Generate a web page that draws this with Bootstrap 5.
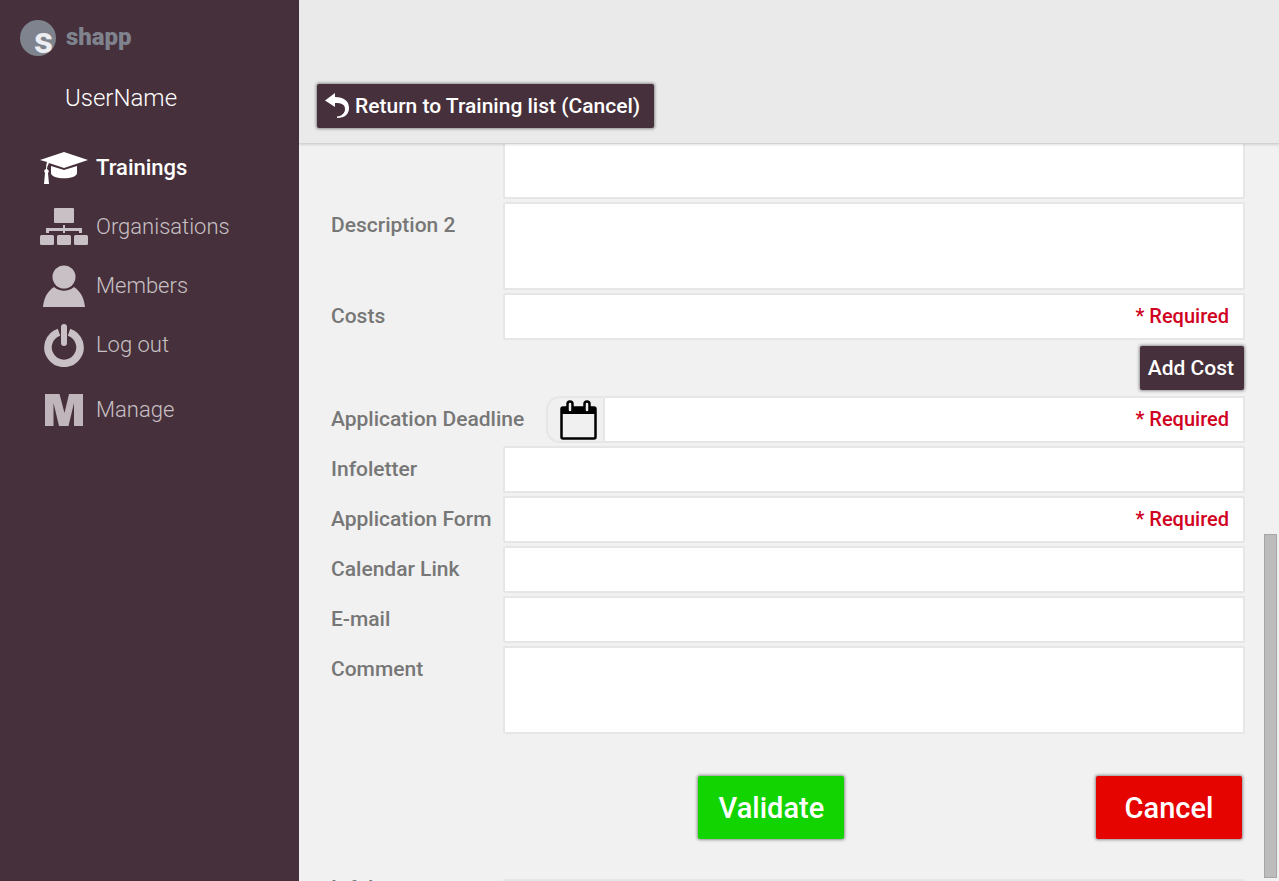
<!DOCTYPE html>
<html lang="en">
<head>
<meta charset="utf-8">
<meta name="viewport" content="width=device-width, initial-scale=1">
<title>shapp – Trainings</title>
<link href="https://cdn.jsdelivr.net/npm/bootstrap@5.3.0/dist/css/bootstrap.min.css" rel="stylesheet">
<style>
  body { font-family: Roboto, "Liberation Sans", sans-serif; background: #f1f1f1; }
  .sidebar { width: 299px; background: #46303b; }
  .brand-name { font-size: 24px; line-height: 32px; font-weight: 900; color: #7f838d; padding-bottom: 2px; margin-left: 10px; }
  .user-name { font-size: 24px; line-height: 32px; font-weight: 300; padding-left: 65px; margin-top: 22px; }
  .side-nav { margin-top: 24px; }
  .side-nav .nav-link { height: 59px; font-size: 22px; font-weight: 300; color: #c8c0c4; padding: 0 0 0 40px; }
  .side-nav .nav-link.active { color: #fff; font-weight: 500; }
  .side-nav .nav-link:last-child { margin-top: 6px; }
  .topbar { height: 144px; background: #eaeaea; border-bottom: 1px solid #d2d2d2; box-shadow: 0 1px 2px rgba(0,0,0,.12); padding: 0 18px 15px; z-index: 1; }
  .btn-solid { --bs-btn-color: #fff; --bs-btn-hover-color: #fff; --bs-btn-active-color: #fff; border: 0; border-radius: 2px; font-weight: 500; box-shadow: 0 0 3px 1px rgba(0,0,0,.4); }
  .btn-plum { --bs-btn-bg: #46303b; --bs-btn-hover-bg: #5a404d; --bs-btn-active-bg: #36242d; font-size: 21px; line-height: 28px; padding: 8px 10px 8px 8px; }
  .btn-return { padding-right: 14px; }
  .btn-go { --bs-btn-bg: #12d400; --bs-btn-hover-bg: #10bd00; --bs-btn-active-bg: #0ea600; }
  .btn-stop { --bs-btn-bg: #e60400; --bs-btn-hover-bg: #cc0400; --bs-btn-active-bg: #b30300; }
  .btn-big { width: 146px; height: 63px; font-size: 29px; line-height: 32px; padding: 0; }
  .form-area { padding: 0 34px 0 32px; }
  .form-stack { gap: 3px; }
  .field-label { width: 172px; flex: none; font-size: 21px; line-height: 28px; padding-top: 9px; font-weight: 500; color: #777; white-space: nowrap; }
  .field-label.wide-label { width: 215px; }
  .form-control { border: 2px solid #e6e6e6; border-radius: 2px; height: 47px; font-size: 20px; font-weight: 500; padding: 0 14px 2px; resize: none; }
  .form-control.required-box::placeholder { color: #d0021f; text-align: right; opacity: 1; }
  textarea.form-control { height: 88px; }
  textarea.form-control.cut-top { height: 55px; border-top: 0; }
  .add-row { padding: 3px 1px 3px 0; }
  .date-btn { width: 57px; height: 47px; background: #f0f0f0; border: 2px solid #e6e6e6; border-right: 0; border-radius: 14px 0 0 14px; }
  .action-row { padding: 42px 3px 40px 0; }
  .action-row .go-cell { padding-right: 18px; }
  .next-row .field-label { line-height: 18px; padding: 0; }
  .scroll-thumb { height: 39%; bottom: 3px; right: 2px; width: 13px; background: #bcbcbc; border: 1px solid #a6a6a6; }
</style>
</head>
<body>
<div class="d-flex vh-100 overflow-hidden">
  <aside class="sidebar flex-shrink-0">
    <a href="#" class="d-flex align-items-center text-decoration-none ps-3 pt-3 ms-1">
      <svg class="overflow-visible" width="36" height="44" viewBox="0 0 36 44" aria-hidden="true"><circle cx="18" cy="22" r="18" fill="#7f838d"/><text x="14" y="37" font-family="Roboto, sans-serif" font-size="37" font-weight="700" fill="#edeef2">s</text></svg>
      <span class="brand-name">shapp</span>
    </a>
    <div class="user-name text-white">UserName</div>
    <nav class="side-nav nav flex-column">
      <a href="#" class="nav-link active d-flex align-items-center gap-2">
        <svg width="48" height="34" viewBox="0 0 48 34" fill="currentColor" aria-hidden="true"><path d="M24 1 48 9 24 17 9 12C8 14 7 16 7 18Q10 20 8 22L9 33H4L5 22Q3 19 6 18 6 14 7 11L0 9Z"/><path d="M11 15 24 19 37 15V22C37 29 11 29 11 22Z"/></svg>
        Trainings</a>
      <a href="#" class="nav-link d-flex align-items-center gap-2">
        <svg width="48" height="38" viewBox="0 0 48 38" fill="currentColor" aria-hidden="true"><rect x="14" width="20" height="15" rx="1"/><path d="M23 17h2v3h17v5h-3v-2H25v2h-2v-2H9v2H6v-5h17z"/><rect y="27" width="14" height="10" rx="1.5"/><rect x="17" y="27" width="14" height="10" rx="1.5"/><rect x="34" y="27" width="14" height="10" rx="1.5"/></svg>
        Organisations</a>
      <a href="#" class="nav-link d-flex align-items-center gap-2">
        <svg width="48" height="42" viewBox="0 0 48 42" fill="currentColor" aria-hidden="true"><circle cx="24" cy="12" r="11.500"/><path d="M3 42C4 32 8 26 14 22 20 27 28 27 34 22 40 26 44 32 45 42Z"/></svg>
        Members</a>
      <a href="#" class="nav-link d-flex align-items-center gap-2">
        <svg width="48" height="44" viewBox="0 0 48 44" fill="none" stroke="currentColor" aria-hidden="true"><path d="M19 9.200A16 16 0 1 0 29 9.200" stroke-width="7.500"/><path d="M24 4V20" stroke-width="6" stroke-linecap="round"/></svg>
        Log out</a>
      <a href="#" class="nav-link d-flex align-items-center gap-2">
        <svg width="48" height="34" viewBox="0 0 48 34" fill="#bfb5ba" aria-hidden="true"><path d="M5 1H19.500L24.500 20 29 1H43V33H34V10L28.500 33H19L13.500 10V33H5Z"/></svg>
        Manage</a>
    </nav>
  </aside>

  <main class="flex-grow-1 d-flex flex-column position-relative">
    <header class="topbar d-flex align-items-end flex-shrink-0 position-relative">
      <button type="button" class="btn btn-solid btn-plum btn-return d-flex align-items-center">
        <svg class="me-1" width="26" height="26" viewBox="0 0 26 26" fill="#fff" aria-hidden="true"><path d="M0 7.500 10 0V4C19 4 24 8 24 15 24 21 20 25 12 25V23.500C17 23 20 20 20 16 20 11 16 10 10 10V14Z"/></svg>
        Return to Training list (Cancel)
      </button>
    </header>

    <form class="form-area flex-grow-1 overflow-hidden">
      <div class="form-stack d-flex flex-column">
        <div class="d-flex"><span class="field-label"></span><textarea class="form-control cut-top" aria-label="Description 1"></textarea></div>
        <div class="d-flex"><label class="field-label" for="desc2">Description 2</label><textarea class="form-control" id="desc2"></textarea></div>
        <div class="d-flex"><label class="field-label" for="costs">Costs</label><input class="form-control required-box" id="costs" placeholder="* Required" required></div>
        <div class="add-row d-flex justify-content-end"><button type="button" class="btn btn-solid btn-plum">Add Cost</button></div>
        <div class="d-flex"><label class="field-label wide-label" for="deadline">Application Deadline</label>
          <button type="button" class="date-btn flex-shrink-0 d-flex align-items-center justify-content-end p-0 pe-1" aria-label="Choose a date">
            <svg width="40" height="40" viewBox="0 0 40 40" aria-hidden="true"><rect x="2.500" y="7.500" width="34" height="31" rx="1.500" fill="#f0f0f0" stroke="#000" stroke-width="2.500"/><path d="M2 7H37V14H2Z"/><rect x="8.500" y="1.500" width="5" height="11" rx="2.500" fill="#eee" stroke="#000" stroke-width="2.500"/><rect x="25.500" y="1.500" width="5" height="11" rx="2.500" fill="#eee" stroke="#000" stroke-width="2.500"/></svg>
          </button>
          <input class="form-control required-box" id="deadline" placeholder="* Required" required></div>
        <div class="d-flex"><label class="field-label" for="info">Infoletter</label><input class="form-control" id="info"></div>
        <div class="d-flex"><label class="field-label" for="appform">Application Form</label><input class="form-control required-box" id="appform" placeholder="* Required" required></div>
        <div class="d-flex"><label class="field-label" for="cal">Calendar Link</label><input class="form-control" id="cal"></div>
        <div class="d-flex"><label class="field-label" for="mail">E-mail</label><input class="form-control" id="mail" type="email"></div>
        <div class="d-flex"><label class="field-label" for="comment">Comment</label><textarea class="form-control" id="comment"></textarea></div>
      </div>
      <div class="action-row row mx-0">
        <div class="go-cell col-7 text-end"><button type="submit" class="btn btn-solid btn-big btn-go">Validate</button></div>
        <div class="col-5 p-0 text-end"><button type="button" class="btn btn-solid btn-big btn-stop">Cancel</button></div>
      </div>
      <div class="next-row d-flex"><label class="field-label" for="info2">Infoletter</label><input class="form-control" id="info2"></div>
    </form>
    <div class="scroll-thumb position-absolute" aria-hidden="true"></div>
  </main>
</div>
<script src="https://cdn.jsdelivr.net/npm/bootstrap@5.3.0/dist/js/bootstrap.bundle.min.js"></script>
</body>
</html>
